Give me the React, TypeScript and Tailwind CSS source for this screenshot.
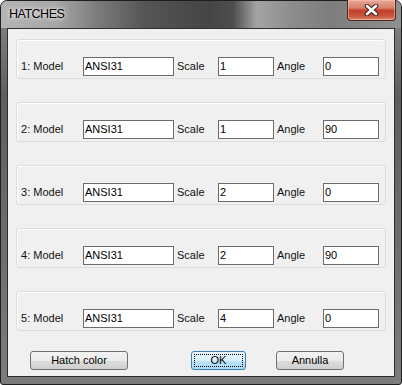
import React from 'react';

const rows = [
  { n: 1, model: 'ANSI31', scale: '1', angle: '0' },
  { n: 2, model: 'ANSI31', scale: '1', angle: '90' },
  { n: 3, model: 'ANSI31', scale: '2', angle: '0' },
  { n: 4, model: 'ANSI31', scale: '2', angle: '90' },
  { n: 5, model: 'ANSI31', scale: '4', angle: '0' },
];

function Field({ value, width }: { value: string; width: string }) {
  return (
    <div
      className={`${width} flex h-[19px] items-center border border-[#6b6b6b] bg-white pl-[1px] text-[11px] leading-none text-black`}
    >
      {value}
    </div>
  );
}

function Button({
  label,
  width,
  focused,
}: {
  label: string;
  width: string;
  focused?: boolean;
}) {
  return (
    <button
      className={`${width} relative flex h-[19px] items-center justify-center rounded-[3px] border text-[11px] leading-none text-black ${
        focused
          ? 'border-[#3c7fb1] bg-[linear-gradient(to_bottom,#eaf6fd_0%,#d9f0fc_50%,#bee6fd_51%,#a7d9f5_100%)]'
          : 'border-[#707070] bg-[linear-gradient(to_bottom,#f2f2f2_0%,#ebebeb_50%,#dddddd_51%,#cfcfcf_100%)]'
      }`}
    >
      {focused && (
        <span className="absolute inset-[2px] border border-dotted border-black" />
      )}
      <span className="relative">{label}</span>
    </button>
  );
}

export default function App() {
  return (
    <div className="h-[385px] w-[402px] bg-white font-['Liberation_Sans',Arial,sans-serif]">
      <div className="flex h-[385px] w-[402px] flex-col rounded-t-[7px] rounded-b-[3px] border border-[#1e1e1e] bg-[linear-gradient(to_bottom,#8a8a8a_0%,#5e5e5e_25%,#7c7c7c_100%)]">
        {/* title bar */}
        <div className="relative flex h-[27px] shrink-0 items-center rounded-t-[6px] bg-[linear-gradient(to_right,#b4b4b4_0%,#a6a6a6_14%,#7c7c7c_24%,#555555_36%,#454545_52%,#4e4e4e_58%,#a4a4a4_64%,#8e8e8e_72%,#7d7d7d_82%,#8f8f8f_100%)] pl-[8px]">
          <span className="text-[12.5px] tracking-[-0.5px] text-black [text-shadow:0_0_6px_rgba(255,255,255,0.9),0_0_3px_rgba(255,255,255,0.8)]">
            HATCHES
          </span>
          <div className="absolute -top-[1px] right-[5px] flex h-[21px] w-[49px] items-center justify-center rounded-b-[4px] border border-t-0 border-[#4a2a24] bg-[linear-gradient(to_bottom,#e6a898_0%,#d8806a_40%,#c2402a_52%,#c8553c_80%,#dc8a6c_100%)] shadow-[inset_0_0_0_1px_rgba(255,200,190,0.5)]">
            <svg width="15" height="12" viewBox="0 0 15 12">
              <path
                d="M3 2 L12 10 M12 2 L3 10"
                stroke="#3b2420"
                strokeWidth="4.6"
                strokeLinecap="round"
              />
              <path
                d="M3 2 L12 10 M12 2 L3 10"
                stroke="#ffffff"
                strokeWidth="2.6"
                strokeLinecap="round"
              />
            </svg>
          </div>
        </div>

        {/* client area */}
        <div className="mx-[6px] flex h-[349px] flex-col border border-[#2e2e2e] bg-[#f0f0f0]">
          <div className="ml-[8px] mt-[10px] flex w-[370px] flex-col gap-[23px]">
            {rows.map((r) => (
              <div
                key={r.n}
                className="flex h-[40px] items-start rounded-[3px] border border-[#d5dfe5] pl-[4px] pt-[17px] shadow-[inset_1px_1px_0_#ffffff]"
              >
                <span className="flex h-[19px] w-[62px] items-center text-[11px] leading-none text-[#111]">
                  {r.n}: Model
                </span>
                <Field value={r.model} width="w-[91px]" />
                <span className="flex h-[19px] w-[44px] items-center pl-[3px] text-[11px] leading-none text-[#111]">
                  Scale
                </span>
                <Field value={r.scale} width="w-[56px]" />
                <span className="flex h-[19px] w-[49px] items-center pl-[3px] text-[11px] leading-none text-[#111]">
                  Angle
                </span>
                <Field value={r.angle} width="w-[56px]" />
              </div>
            ))}
          </div>

          <div className="mt-[20px] flex items-center pl-[22px]">
            <Button label="Hatch color" width="w-[98px]" />
            <div className="ml-[63px]">
              <Button label="OK" width="w-[55px]" focused />
            </div>
            <div className="ml-[30px]">
              <Button label="Annulla" width="w-[68px]" />
            </div>
          </div>
        </div>
      </div>
    </div>
  );
}
